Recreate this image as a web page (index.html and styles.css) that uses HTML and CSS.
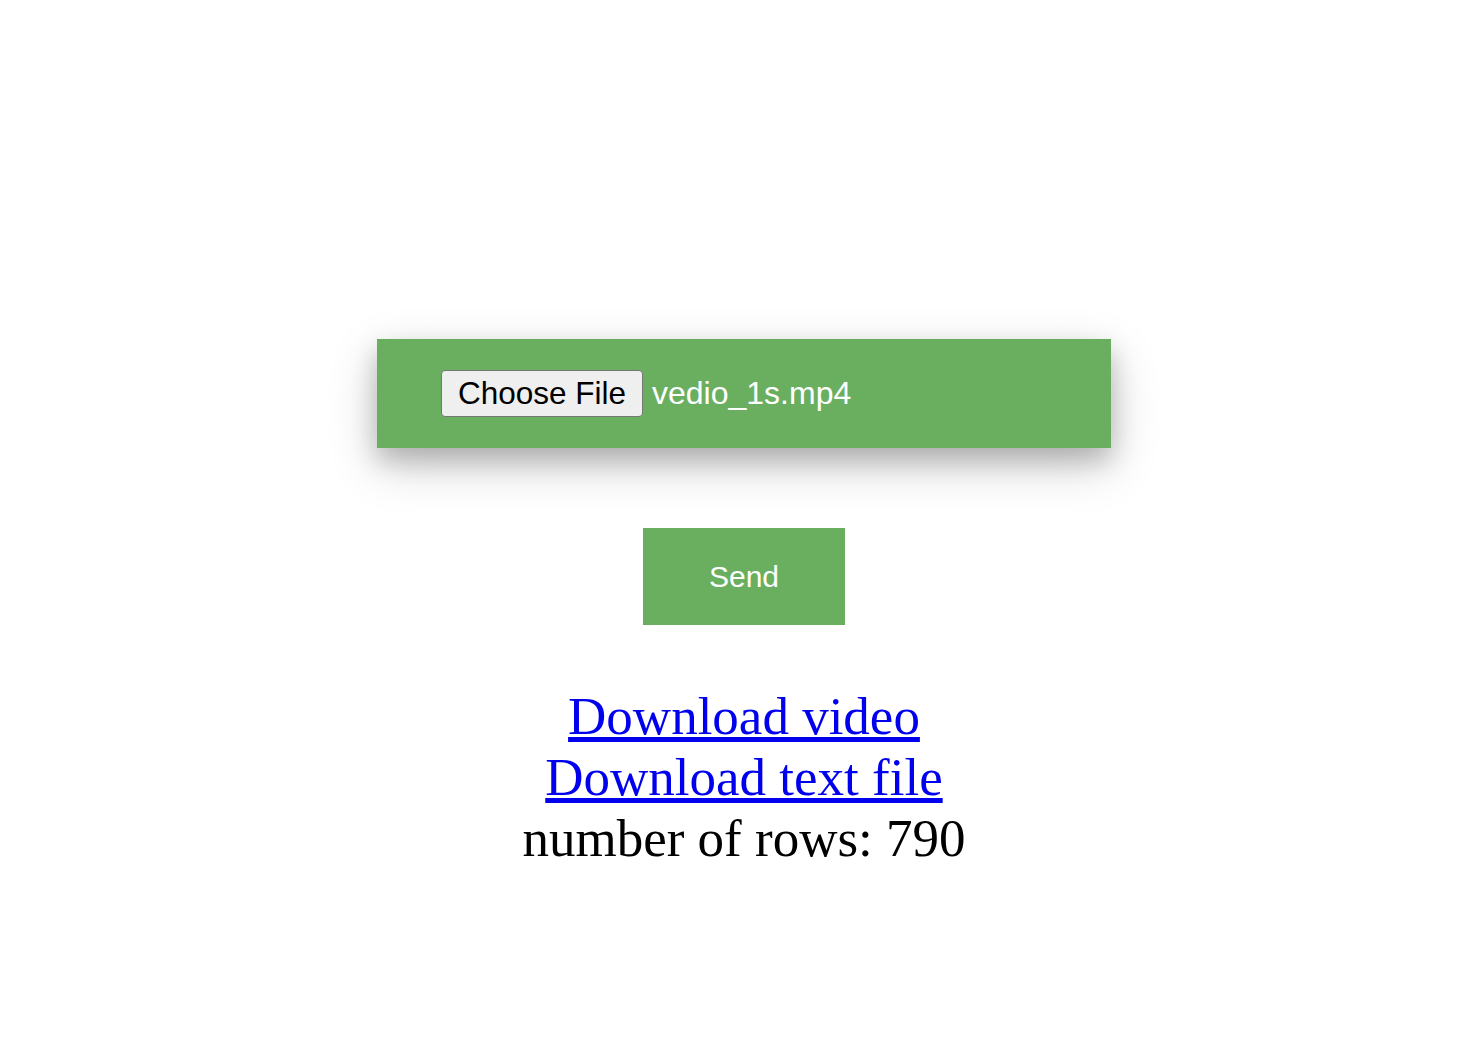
FILE: index.html
```html
<!DOCTYPE html>
<html lang="en">
<head>
<meta charset="utf-8">
<title>Upload</title>
<link rel="stylesheet" href="styles.css">
</head>
<body>
<main class="page">
  <form class="upload-card">
    <label class="file-picker">
      <span class="file-button">Choose File</span>
      <span class="file-name">vedio_1s.mp4</span>
    </label>
  </form>
  <button class="send-button" type="button">Send</button>
  <div class="results">
    <a href="#" class="result-link">Download video</a><br>
    <a href="#" class="result-link">Download text file</a><br>
    <span class="row-count">number of rows: 790</span>
  </div>
</main>
</body>
</html>
```
FILE: styles.css
```css
html, body {
  margin: 0;
  padding: 0;
  background: #ffffff;
}

body {
  margin-left: 8px;
}

.page {
  display: flex;
  flex-direction: column;
  align-items: center;
  padding-top: 339px;
}

.upload-card {
  box-sizing: border-box;
  width: 734px;
  height: 109px;
  margin: 0;
  padding: 0 64px;
  background: #6aaf5f;
  display: flex;
  align-items: center;
  box-shadow: 0 12px 24px 0 rgba(0, 0, 0, 0.2), 0 17px 50px 0 rgba(0, 0, 0, 0.19);
}

.file-picker {
  display: flex;
  align-items: center;
  gap: 9px;
  font-family: "Liberation Sans", Arial, sans-serif;
  font-size: 32px;
}

.file-button {
  box-sizing: border-box;
  width: 202px;
  height: 47px;
  padding: 0 0 0 16px;
  display: flex;
  align-items: center;
  background: #efefef;
  color: #000000;
  border: 1px solid #767676;
  border-radius: 4px;
  font-size: 31.5px;
}

.file-name {
  color: #ffffff;
}

.send-button {
  margin-top: 80px;
  width: 202px;
  height: 97px;
  border: none;
  border-radius: 0;
  background: #6aaf5f;
  color: #ffffff;
  font-family: "Liberation Sans", Arial, sans-serif;
  font-size: 30px;
  padding: 0;
  cursor: pointer;
}

.results {
  margin-top: 61px;
  text-align: center;
  font-family: "Liberation Serif", "Times New Roman", serif;
  font-size: 53px;
  line-height: 61px;
  color: #000000;
}

.result-link {
  color: #0000ee;
  text-decoration: underline;
}
```
